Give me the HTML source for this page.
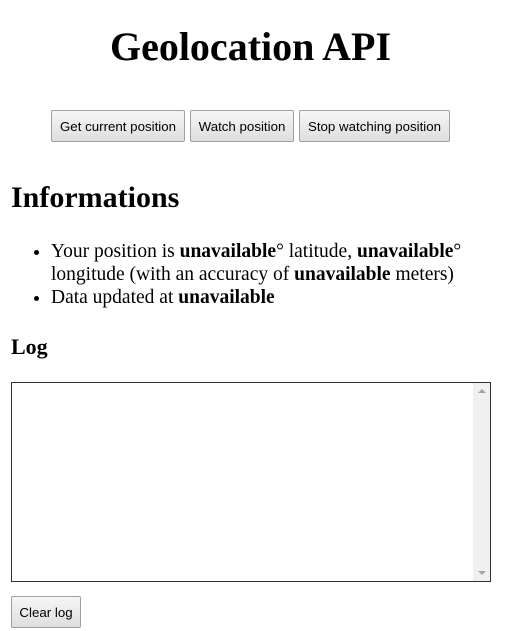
<!DOCTYPE html>
<html><head><style>
body{margin:0;width:507px;height:631px;background:#fff;font-family:"Liberation Serif",serif;color:#000;position:relative;overflow:hidden}
.a{position:absolute;margin:0}
h1{font-size:40px;font-weight:bold;left:0;width:501px;text-align:center;top:23px;line-height:48px}
button{position:absolute;font-family:"Liberation Sans",sans-serif;font-size:13.3px;color:#000;background:linear-gradient(#f6f6f6,#dedede);border:1px solid #a0a0a0;border-radius:2px;height:32px;padding:0;box-sizing:border-box}
h2{font-size:30px;left:11px;top:180px;line-height:36px}
ul{left:11px;top:240px;padding-left:40px;font-size:19.5px;line-height:23px;width:470px;list-style:disc}
h3{font-size:22px;left:11px;top:333px;line-height:28px}
.ta{position:absolute;left:11px;top:382px;width:480px;height:200px;box-sizing:border-box;border:1px solid #333;background:#fff}
.sb{position:absolute;right:0;top:0;width:17px;height:198px;background:#f0f0f0}
.up,.dn{position:absolute;left:5px;width:0;height:0;border-left:4px solid transparent;border-right:4px solid transparent}
.up{top:6px;border-bottom:4px solid #a3a3a3}
.dn{bottom:6px;border-top:4px solid #a3a3a3}
</style></head><body>
<h1 class="a">Geolocation API</h1>
<button style="left:51px;top:110px;width:134px">Get current position</button>
<button style="left:190px;top:110px;width:104px">Watch position</button>
<button style="left:299px;top:110px;width:151px">Stop watching position</button>
<h2 class="a">Informations</h2>
<ul class="a"><li>Your position is <b>unavailable</b>° latitude, <b>unavailable</b>° longitude (with an accuracy of <b>unavailable</b> meters)</li><li>Data updated at <b>unavailable</b></li></ul>
<h3 class="a">Log</h3>
<div class="ta"><div class="sb"><div class="up"></div><div class="dn"></div></div></div>
<button style="left:11px;top:596px;width:70px">Clear log</button>
</body></html>
